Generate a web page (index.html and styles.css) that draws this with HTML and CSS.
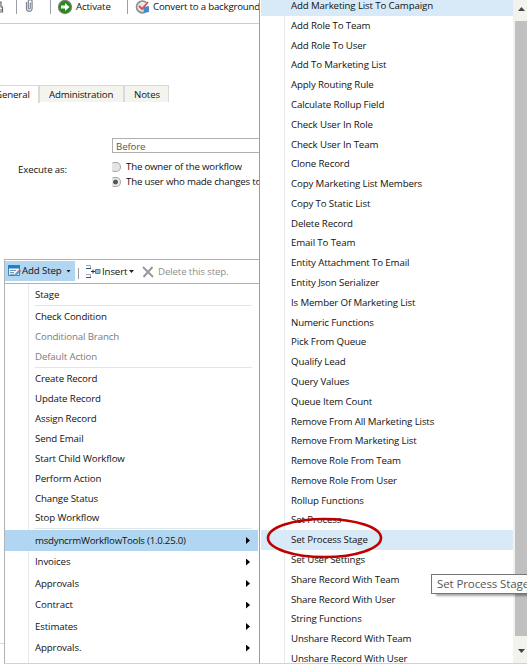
FILE: index.html
```html
<!DOCTYPE html>
<html lang="en">
<head>
<meta charset="utf-8">
<title>Workflow</title>
<link rel="stylesheet" href="styles.css">
</head>
<body>
<div class="window">
  <main class="page">
    <div class="ribbon">
      <svg class="i-cut" width="4" height="14" viewBox="0 0 4 14"><path d="M0 2h1v5h1.500v5H0M0 10h2" fill="none" stroke="#666" stroke-width="1.200"/></svg>
      <i class="rule"></i>
      <svg class="i-clip" width="9" height="14" viewBox="0 0 9 14"><path d="M1.500 3v6.500a2.800 2.800 0 0 0 5.600 0V2a2 2 0 0 0-3.800 0v7a1 1 0 0 0 2 0V3.500" fill="none" stroke="#7d8792" stroke-width="1.200"/></svg>
      <i class="rule"></i>
      <svg class="i-go" width="16" height="16" viewBox="0 0 16 16"><circle cx="8" cy="8" r="7.200" fill="#7d8078"/><circle cx="8" cy="8" r="5.900" fill="#258a17"/><path d="M4 6.500h4V4l4.500 4L8 12V9.500H4z" fill="#fff"/></svg>
      <span class="t t-act">Activate</span>
      <i class="rule"></i>
      <svg class="i-conv" width="15" height="16" viewBox="0 0 15 16"><path d="M11 3.500A5.700 5.700 0 1 0 10 13" fill="none" stroke="#8c8f94" stroke-width="2"/><circle cx="6.500" cy="8" r="4" fill="#e3e6e9"/><path d="M4 7l3 3 6-7" fill="none" stroke="#dd4a3d" stroke-width="1.800"/><path d="M8 8l6-1v6l-5 1z" fill="#4c86cd"/></svg>
      <span class="t t-conv">Convert to a background</span>
    </div>
    <div class="tabs">
      <div class="tab on"><span class="t">General</span></div>
      <div class="tab t2"><span class="t">Administration</span></div>
      <div class="tab t3"><span class="t">Notes</span></div>
    </div>
    <div class="form">
      <span class="t label">Execute as:</span>
      <div class="fields">
        <div class="box"><span class="t">Before</span></div>
        <div class="opt"><i class="radio"></i><span class="t">The owner of the workflow</span></div>
        <div class="opt"><i class="radio sel"></i><span class="t">The user who made changes to</span></div>
      </div>
    </div>
    <section class="steps">
      <div class="bar">
        <div class="add">
          <svg width="13" height="12" viewBox="0 0 13 12"><path d="M.5.500h11v10H.5z" fill="#eef6fc" stroke="#3b83bd"/><path d="M0 0h12v3.500H0z" fill="#1b82cc"/><path d="M2 5.500h6M2 7.500h4M2 9.300h4" stroke="#7996ad"/><path d="M6 10l4-4.500 2 1.500-4 4z" fill="#5d9ccc"/><path d="M10 5.500l2-1 1 2-1.300 1z" fill="#d85f42"/></svg>
          <span class="t t-add">Add Step</span><i class="down"></i>
        </div>
        <i class="split"></i>
        <svg class="i-ins" width="15" height="14" viewBox="0 0 15 14"><path d="M0 .5h4.500V3.500M0 9.500h4.500V12.500" fill="none" stroke="#9aa6ba"/><path d="M0 3.500h5M0 12.500h5" stroke="#374e7d"/><path d="M5 6.500h4M7 4.500v4" stroke="#333"/><path d="M9.500 4.500h4.500v4h-4.500z" fill="#8ebce8" stroke="#4e7eb5"/></svg>
        <span class="t t-ins">Insert</span><i class="down"></i>
        <svg class="i-x" width="12" height="12" viewBox="0 0 12 12"><path d="M1 1l10 10M10.500 1L1.500 11" stroke="#999" stroke-width="2"/></svg>
        <span class="t t-del">Delete this step.</span>
      </div>
      <ul class="menu">
        <li class="first"><span class="t">Stage</span></li>
        <li class="sep"></li>
        <li><span class="t">Check Condition</span></li>
        <li class="off"><span class="t">Conditional Branch</span></li>
        <li class="off"><span class="t">Default Action</span></li>
        <li class="sep"></li>
        <li><span class="t">Create Record</span></li>
        <li><span class="t">Update Record</span></li>
        <li><span class="t">Assign Record</span></li>
        <li><span class="t">Send Email</span></li>
        <li><span class="t">Start Child Workflow</span></li>
        <li><span class="t">Perform Action</span></li>
        <li><span class="t">Change Status</span></li>
        <li><span class="t">Stop Workflow</span></li>
        <li class="sep"></li>
        <li class="sub hot"><span class="t">msdyncrmWorkflowTools (1.0.25.0)</span><i class="more"></i></li>
        <li class="sub"><span class="t">Invoices</span><i class="more"></i></li>
        <li class="sub"><span class="t">Approvals</span><i class="more"></i></li>
        <li class="sub"><span class="t">Contract</span><i class="more"></i></li>
        <li class="sub"><span class="t">Estimates</span><i class="more"></i></li>
        <li class="sub"><span class="t">Approvals.</span><i class="more"></i></li>
      </ul>
    </section>
  </main>
  <aside class="flyout">
    <ul class="list">
      <li class="hot"><span class="t">Add Marketing List To Campaign</span></li>
      <li><span class="t">Add Role To Team</span></li>
      <li><span class="t">Add Role To User</span></li>
      <li><span class="t">Add To Marketing List</span></li>
      <li><span class="t">Apply Routing Rule</span></li>
      <li><span class="t">Calculate Rollup Field</span></li>
      <li><span class="t">Check User In Role</span></li>
      <li><span class="t">Check User In Team</span></li>
      <li><span class="t">Clone Record</span></li>
      <li><span class="t">Copy Marketing List Members</span></li>
      <li><span class="t">Copy To Static List</span></li>
      <li><span class="t">Delete Record</span></li>
      <li><span class="t">Email To Team</span></li>
      <li><span class="t">Entity Attachment To Email</span></li>
      <li><span class="t">Entity Json Serializer</span></li>
      <li><span class="t">Is Member Of Marketing List</span></li>
      <li><span class="t">Numeric Functions</span></li>
      <li><span class="t">Pick From Queue</span></li>
      <li><span class="t">Qualify Lead</span></li>
      <li><span class="t">Query Values</span></li>
      <li><span class="t">Queue Item Count</span></li>
      <li><span class="t">Remove From All Marketing Lists</span></li>
      <li><span class="t">Remove From Marketing List</span></li>
      <li><span class="t">Remove Role From Team</span></li>
      <li><span class="t">Remove Role From User</span></li>
      <li><span class="t">Rollup Functions</span></li>
      <li><span class="t">Set Process</span></li>
      <li class="hot"><span class="t">Set Process Stage</span></li>
      <li><span class="t">Set User Settings</span></li>
      <li><span class="t">Share Record With Team</span></li>
      <li><span class="t">Share Record With User</span></li>
      <li><span class="t">String Functions</span></li>
      <li><span class="t">Unshare Record With Team</span></li>
      <li><span class="t">Unshare Record With User</span></li>
    </ul>
    <div class="scroll"><i class="up"></i><div class="thumb"></div><i class="dn"></i></div>
  </aside>
  <svg class="ring" width="120" height="46" viewBox="0 0 120 46"><ellipse cx="58.500" cy="22" rx="56.500" ry="19" fill="none" stroke="#c00000" stroke-width="2.600"/></svg>
  <div class="tip">Set Process Stage</div>
</div>
</body>
</html>
```

FILE: styles.css
```css
* { box-sizing: border-box; }
body { margin: 0; background: #fff; font-family: "Open Sans", "Noto Sans", sans-serif; font-size: 9.7px; letter-spacing: -.13px; color: #111; }
ul { list-style: none; margin: 0; padding: 0; }
i { display: block; flex: none; }
svg { display: block; flex: none; }
.t { white-space: nowrap; line-height: 14px; }
.window { position: relative; width: 527px; height: 667px; overflow: hidden; display: grid; grid-template-columns: 259px 268px; }

.page { overflow: hidden; height: 667px; display: flex; flex-direction: column; background: linear-gradient(#ddd, #ddd) 0 643px / 4px 1px no-repeat; }
.ribbon { height: 24px; flex: none; border-bottom: 1px solid #ccc; display: flex; align-items: flex-start; }
.ribbon .rule { width: 1px; height: 14px; background: #9ba0a8; }
.i-cut { margin-right: 12px; }
.i-clip { margin: -1px 16px 0 8px; }
.i-go { margin: -1px 3px 0 6px; }
.t-act { width: 51px; flex: none; }
.i-conv { margin: -1px 3px 0 7px; }
.t-conv { letter-spacing: -.2px; }

.tabs { display: flex; margin-top: 61px; height: 18px; flex: none; }
.tab { border-top: 1px solid #d8d8d8; border-right: 2px solid #dadada; background: #f3f4ee; padding-top: 2px; height: 17px; }
.tab.on { width: 40px; background: #fff; height: 18px; }
.tab.on .t { margin-left: -5px; }
.tab.t2 { width: 85px; padding-left: 9px; letter-spacing: -.2px; }
.tab.t3 { width: 44px; padding-left: 9px; border-right-width: 1px; }

.form { margin-top: 35px; height: 121px; flex: none; display: flex; }
.label { width: 112px; padding: 25px 0 0 18px; flex: none; }
.fields { flex: none; width: 147px; overflow: hidden; }
.box { height: 15px; width: 160px; border: 1px solid #b0b0b0; padding: 1px 0 0 3px; color: #555; margin-bottom: 6px; }
.box .t { display: block; }
.opt { height: 15px; display: flex; align-items: center; letter-spacing: -.2px; }
.radio { width: 9px; height: 10px; margin: 0 5px 0 0; border: 1px solid #a5a5a5; border-left: 0; border-radius: 2px 5px 5px 2px; background: #e4e4e4; }
.radio.sel { background: radial-gradient(circle at 3.500px 4px, #555 2px, #e9e9e9 2.800px); }

.steps { margin-left: 4px; height: 405px; flex: none; border: 1px solid #b0b3b6; border-right: 0; border-bottom-color: #d2d2d2; background: #fff; }
.bar { height: 24px; border-bottom: 1px solid #b0b3b6; display: flex; align-items: center; }
.add { height: 20px; width: 70px; background: #b0d6f1; display: flex; align-items: center; padding-left: 3px; align-self: flex-start; margin-top: 1px; }
.t-add { width: 44px; margin-left: 1px; flex: none; }
.down { width: 5px; height: 3px; background: #222; clip-path: polygon(0 0, 100% 0, 50% 100%); }
.split { width: 1px; height: 11px; background: #999; margin: 4px 7px 0 3px; }
.t-ins { margin-left: 1px; width: 27px; flex: none; }
.i-x { margin: 0 4px 0 8px; }
.t-del { color: #8e8e8e; }

.menu { height: 379px; display: flex; flex-direction: column; background: linear-gradient(#e4eaea, #e4eaea) 23px 0 / 1px 100% no-repeat; }
.menu li { height: 19.900px; flex: none; display: flex; align-items: center; padding-left: 30px; }
.menu .first { height: 21px; }
.menu .sep { height: 1px; background: #e0e8e8; margin: 0 7px 0 30px; padding: 0; }
.menu .sep:nth-child(2) { margin-bottom: 1px; }
.menu .sep:nth-child(6) { margin: 0 7px 1.600px 30px; }
.menu .sep:nth-child(15) { margin-bottom: .4px; }
.menu .off { color: #7b7b7b; }
.menu .sub { height: 21.500px; justify-content: space-between; padding-right: 9px; }
.menu .sub.hot { background: #b0d6f1; margin-right: 1px; padding-right: 8px; letter-spacing: -.24px; }
.more { width: 4px; height: 7px; background: #000; clip-path: polygon(0 0, 100% 50%, 0 100%); }

.flyout { height: 664px; overflow: hidden; border-left: 1px solid #999da1; border-bottom: 1px solid #d2d2d2; display: flex; background: #fff; }
.list { width: 253px; flex: none; margin-top: -3.800px; background: linear-gradient(#e4eaea, #e4eaea) 24px 0 / 1px 100% no-repeat; }
.list li { height: 19.790px; padding-left: 30px; display: flex; align-items: center; margin-left: 1px; }
.list .hot { background: #d8eaf8; }
.scroll { width: 14px; height: 663px; background: #f3f3ed; display: flex; flex-direction: column; align-items: flex-end; flex: none; }
.thumb { width: 12px; height: 617px; background: #c0c0c0; }
.up, .dn { width: 7px; height: 4px; background: #444; margin: 7px 2px 10px 0; clip-path: polygon(50% 0, 100% 100%, 0 100%); }
.dn { margin-top: 13px; clip-path: polygon(0 0, 100% 0, 50% 100%); }

.ring { position: absolute; left: 266px; top: 516px; }
.tip { position: absolute; left: 431px; top: 574px; width: 110px; height: 20px; border: 1px solid #767676; background: linear-gradient(90deg, #fff 70%, #f5f5ef); box-shadow: 4px 3px 2px -1px rgba(0,0,0,.35); color: #575757; font-size: 11.500px; letter-spacing: -.1px; line-height: 17px; padding-left: 5px; white-space: nowrap; }
```
